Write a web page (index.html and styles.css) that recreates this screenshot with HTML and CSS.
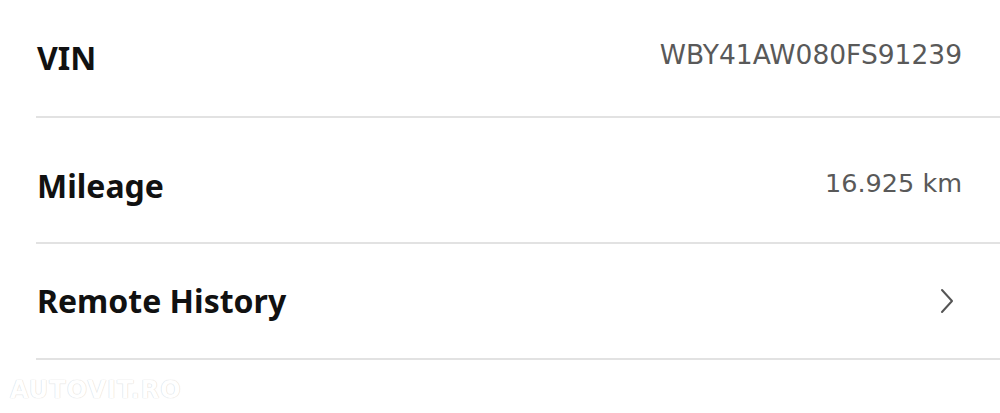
FILE: index.html
```html
<!DOCTYPE html>
<html lang="en">
<head>
<meta charset="utf-8">
<title>Vehicle details</title>
<link rel="stylesheet" href="styles.css">
</head>
<body>
<div class="page">
  <ul class="list">
    <li class="row row-vin">
      <span class="label">VIN</span>
      <span class="value">WBY41AW080FS91239</span>
    </li>
    <li class="row row-mileage">
      <span class="label">Mileage</span>
      <span class="value">16.925 km</span>
    </li>
    <li class="row row-remote">
      <span class="label">Remote History</span>
      <svg class="chevron" width="14" height="26" viewBox="0 0 14 26" aria-hidden="true">
        <path d="M2 2 L12 13 L2 24" fill="none" stroke="#555" stroke-width="2" stroke-linecap="round" stroke-linejoin="round"/>
      </svg>
    </li>
  </ul>
  <div class="watermark">AUTOVIT.RO</div>
</div>
</body>
</html>
```

FILE: styles.css
```css
html, body {
  margin: 0;
  padding: 0;
  background: #ffffff;
}

.page {
  position: relative;
  width: 1000px;
  height: 413px;
  overflow: hidden;
}

.list {
  list-style: none;
  margin: 0;
  padding: 0 0 0 36px;
}

.row {
  display: flex;
  align-items: center;
  justify-content: space-between;
  box-sizing: border-box;
  padding: 0 38px 0 1px;
  border-bottom: 2px solid #e2e2e2;
}

.row-vin {
  height: 118px;
}

.row-mileage {
  height: 126px;
  padding-top: 12px;
}

.row-remote {
  height: 116px;
}

.label {
  font-family: "Noto Sans", "DejaVu Sans", sans-serif;
  font-weight: 700;
  font-size: 32px;
  line-height: 1;
  color: #111111;
}

.value {
  font-family: "DejaVu Sans", "Noto Sans", sans-serif;
  font-weight: 400;
  font-size: 26.5px;
  line-height: 1;
  color: #595959;
  margin-bottom: 5px;
}

.row-mileage .value {
  font-size: 25.5px;
}

.chevron {
  display: block;
  margin-right: 8px;
}

.watermark {
  position: absolute;
  left: 10px;
  top: 376px;
  font-family: "DejaVu Sans", sans-serif;
  font-weight: 700;
  font-size: 24px;
  letter-spacing: 1px;
  color: #ffffff;
  text-shadow: 0 0 1px #d8d8d8, 0 0 1px #d8d8d8;
}
```
